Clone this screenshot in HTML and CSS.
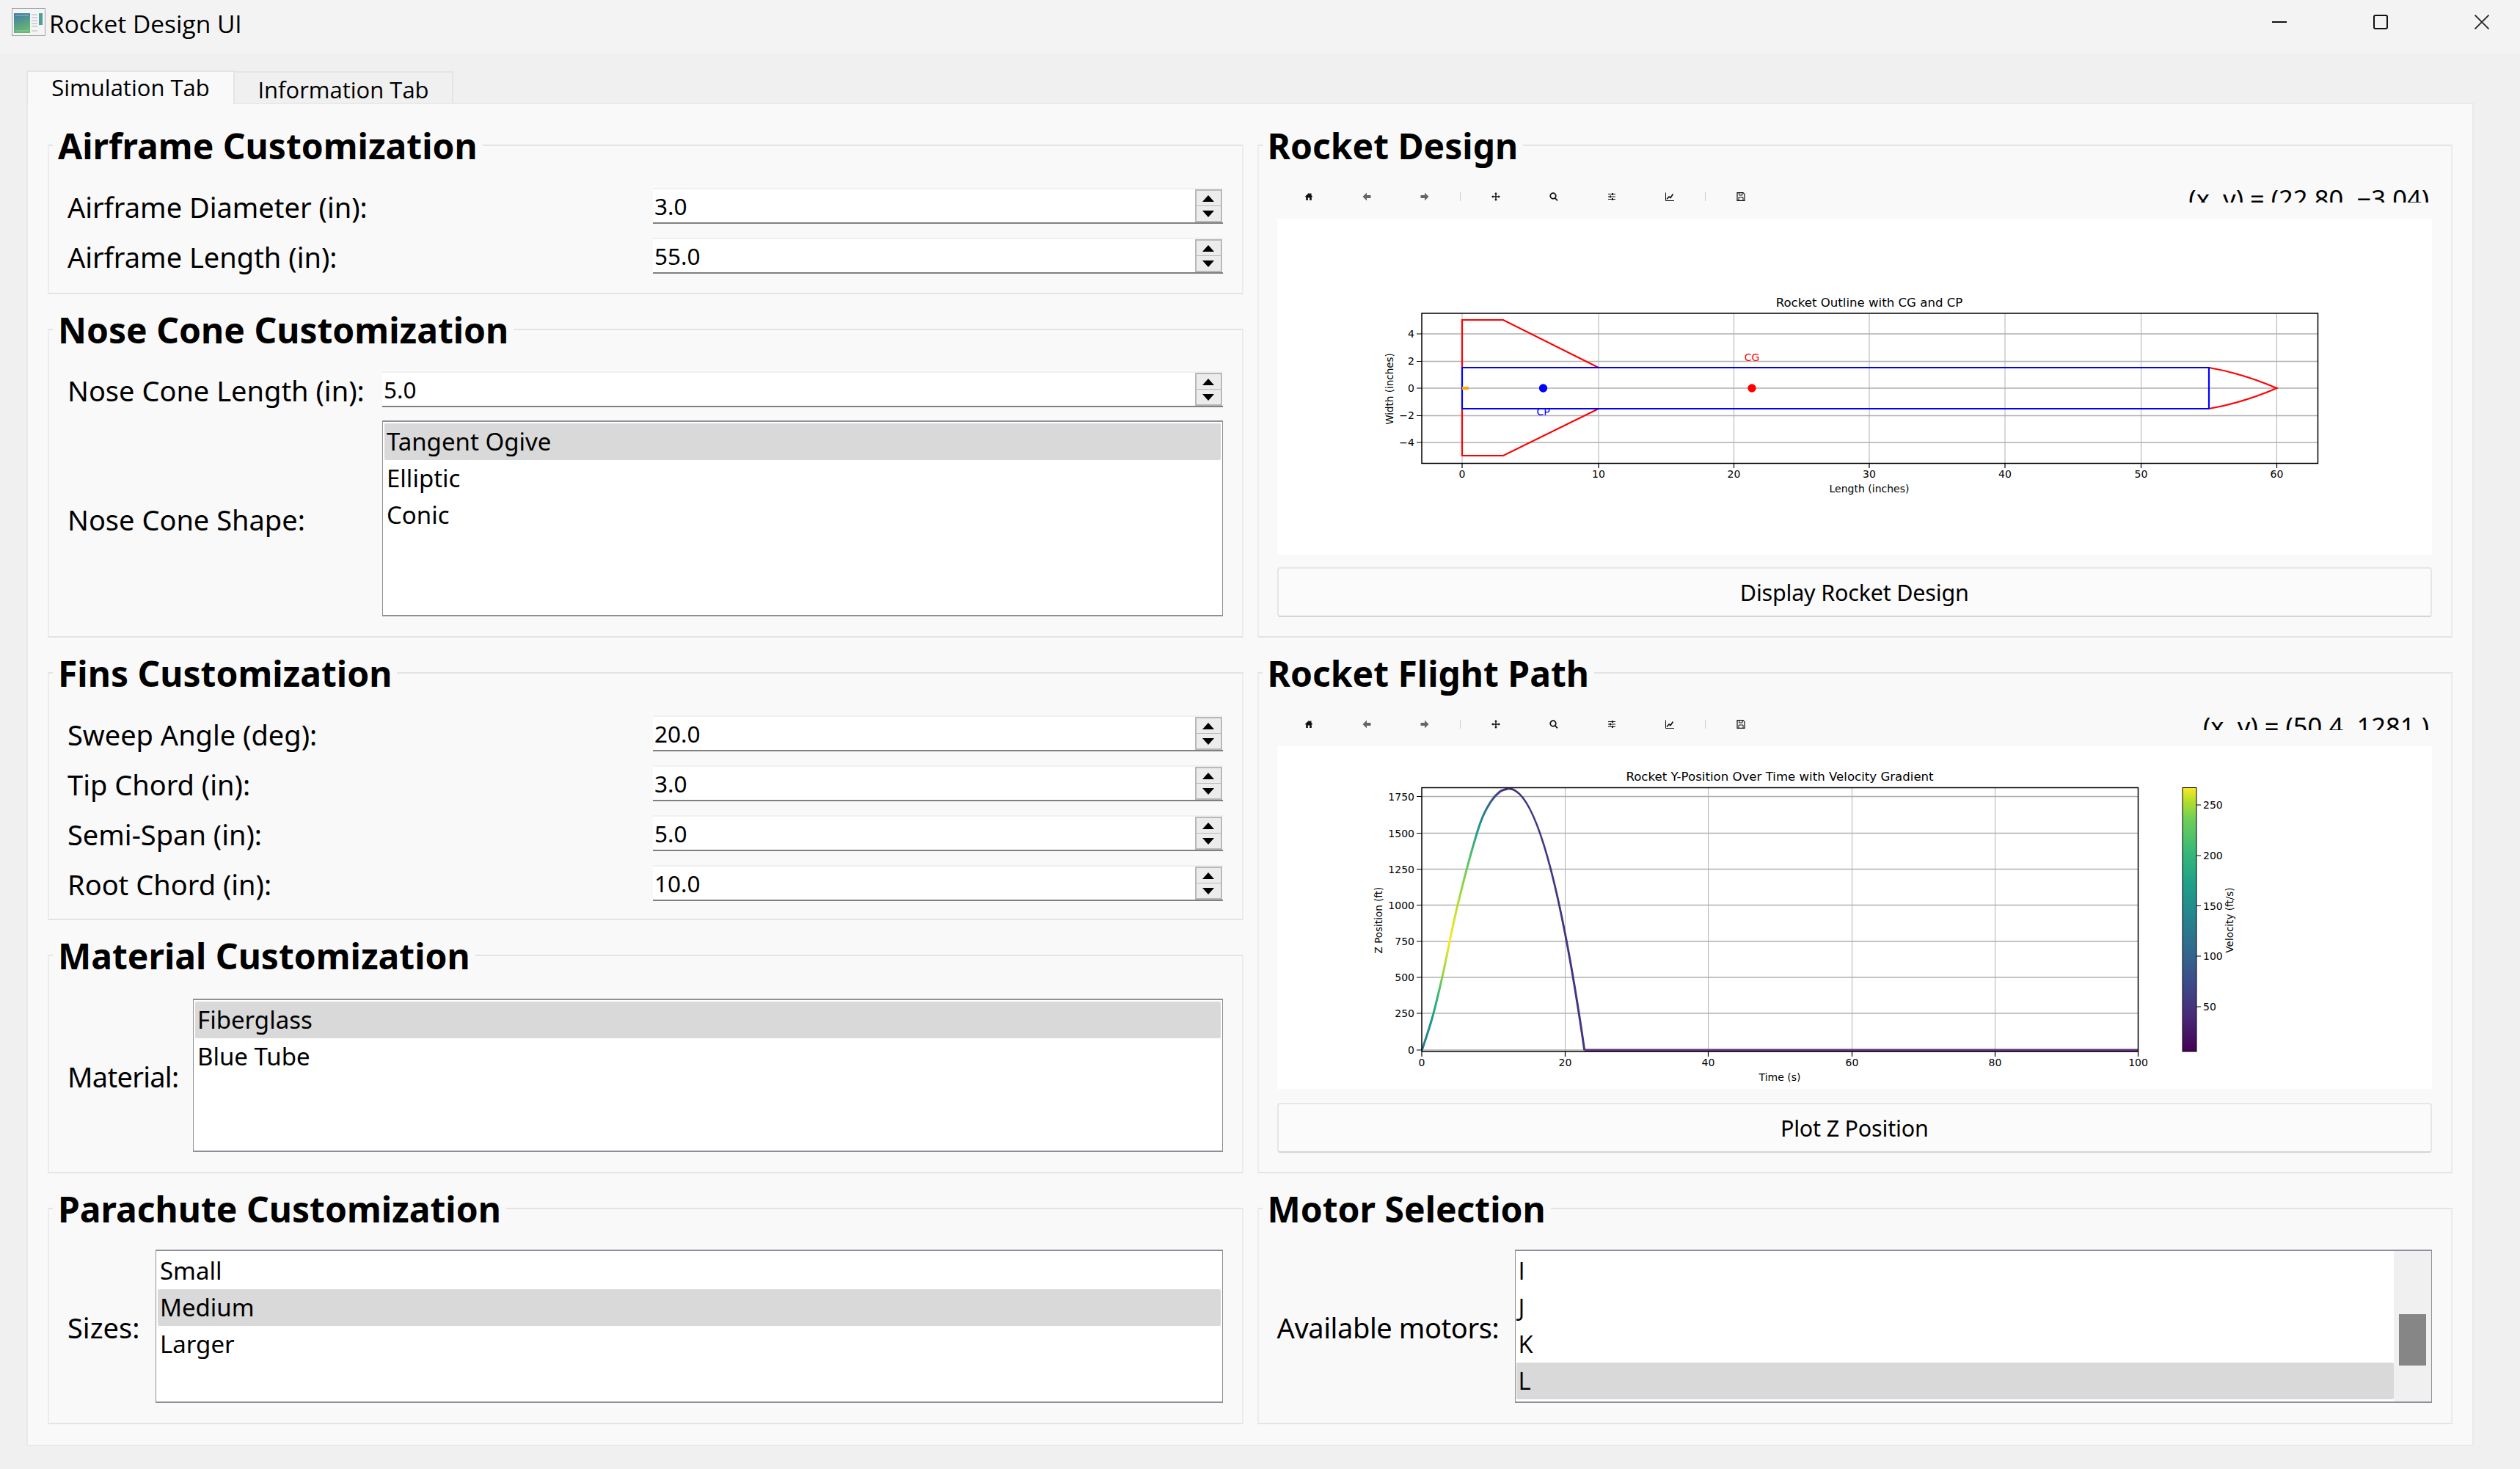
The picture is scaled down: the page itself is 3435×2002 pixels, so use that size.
FILE: index.html
```html
<!DOCTYPE html>
<html lang="en">
<head>
    <meta charset="UTF-8">
    <meta name="viewport" content="width=device-width, initial-scale=1.0">
    <title>Rocket Design UI</title>
    <link rel="stylesheet" href="styles.css">
</head>
<body>

    <header class="titlebar">
        <svg class="app-icon" viewBox="0 0 46 38">
            <defs>
                <linearGradient id="iconPanel" x1="0" y1="0" x2="0.3" y2="1">
                    <stop offset="0" stop-color="#3f78ad"/>
                    <stop offset="1" stop-color="#68b86f"/>
                </linearGradient>
            </defs>
            <rect x="0.5" y="0.5" width="45" height="37" fill="#f2f4f5" stroke="#a4a4a4"/>
            <rect x="3" y="7" width="22" height="27" fill="url(#iconPanel)"/>
            <path d="M5 10h18M5 31h18" stroke="#9fd0c4" stroke-width="0.8"/>
            <path d="M27 9h8M27 13h8M27 17h8M27 21h8M27 25h8M27 31h8" stroke="#b4b4b4" stroke-width="1.2"/>
            <rect x="37" y="7" width="5" height="16" fill="#4f9f96"/>
        </svg>
        <span class="app-title">Rocket Design UI</span>
        <div class="window-controls">
            <svg class="win-btn" viewBox="0 0 20 20"><path d="M0 10h20" stroke="#111" stroke-width="2"/></svg>
            <svg class="win-btn" viewBox="0 0 20 20"><rect x="1" y="1" width="18" height="18" rx="2" fill="none" stroke="#111" stroke-width="2"/></svg>
            <svg class="win-btn" viewBox="0 0 20 20"><path d="M0.5 0.5l19 19M19.5 0.5l-19 19" stroke="#222" stroke-width="1.8"/></svg>
        </div>
    </header>

    <main class="window-body">
        <nav class="tabs">
            <div class="tab tab-active">Simulation Tab</div>
            <div class="tab">Information Tab</div>
        </nav>

        <div class="tab-pane">
            <div class="column">

                <fieldset class="group group-airframe">
                    <legend>Airframe Customization</legend>
                    <div class="rows">
                        <div class="row">
                            <label class="wide-label">Airframe Diameter (in):</label>
                            <div class="spin"><input value="3.0"><div class="spin-btns"><span class="up"></span><span class="down"></span></div></div>
                        </div>
                        <div class="row">
                            <label class="wide-label">Airframe Length (in):</label>
                            <div class="spin"><input value="55.0"><div class="spin-btns"><span class="up"></span><span class="down"></span></div></div>
                        </div>
                    </div>
                </fieldset>

                <fieldset class="group group-nose">
                    <legend>Nose Cone Customization</legend>
                    <div class="rows rows-nose">
                        <div class="row">
                            <label>Nose Cone Length (in):</label>
                            <div class="spin"><input value="5.0"><div class="spin-btns"><span class="up"></span><span class="down"></span></div></div>
                        </div>
                        <div class="row">
                            <label>Nose Cone Shape:</label>
                            <ul class="list list-nose">
                                <li class="selected">Tangent Ogive</li>
                                <li>Elliptic</li>
                                <li>Conic</li>
                            </ul>
                        </div>
                    </div>
                </fieldset>

                <fieldset class="group group-fins">
                    <legend>Fins Customization</legend>
                    <div class="rows">
                        <div class="row">
                            <label class="wide-label">Sweep Angle (deg):</label>
                            <div class="spin"><input value="20.0"><div class="spin-btns"><span class="up"></span><span class="down"></span></div></div>
                        </div>
                        <div class="row">
                            <label class="wide-label">Tip Chord (in):</label>
                            <div class="spin"><input value="3.0"><div class="spin-btns"><span class="up"></span><span class="down"></span></div></div>
                        </div>
                        <div class="row">
                            <label class="wide-label">Semi-Span (in):</label>
                            <div class="spin"><input value="5.0"><div class="spin-btns"><span class="up"></span><span class="down"></span></div></div>
                        </div>
                        <div class="row">
                            <label class="wide-label">Root Chord (in):</label>
                            <div class="spin"><input value="10.0"><div class="spin-btns"><span class="up"></span><span class="down"></span></div></div>
                        </div>
                    </div>
                </fieldset>

                <fieldset class="group group-material">
                    <legend>Material Customization</legend>
                    <div class="row row-list">
                        <label class="label-material">Material:</label>
                        <ul class="list">
                            <li class="selected">Fiberglass</li>
                            <li>Blue Tube</li>
                        </ul>
                    </div>
                </fieldset>

                <fieldset class="group group-chute">
                    <legend>Parachute Customization</legend>
                    <div class="row row-list">
                        <label class="label-sizes">Sizes:</label>
                        <ul class="list">
                            <li>Small</li>
                            <li class="selected">Medium</li>
                            <li>Larger</li>
                        </ul>
                    </div>
                </fieldset>
            </div>

            <div class="column">

                <fieldset class="group group-design">
                    <legend>Rocket Design</legend>
                    <div class="toolbar">
                        <span class="tool"><svg viewBox="0 0 12 12"><path d="M6 1L0.5 6.3h1.7V11h2.6V7.5h2.4V11h2.6V6.3h1.7L9.5 4V1.5H8v1z" fill="#111"/></svg></span>
                        <span class="tool"><svg viewBox="0 0 12 12"><path d="M6 0.5L0.5 6 6 11.5V8h5.5V4H6z" fill="#666"/></svg></span>
                        <span class="tool"><svg viewBox="0 0 12 12"><path d="M6 0.5L11.5 6 6 11.5V8H0.5V4H6z" fill="#666"/></svg></span>
                        <span class="tool-sep"></span>
                        <span class="tool"><svg viewBox="0 0 12 12"><path d="M6 0L8 2.4H6.7V5.3H9.6V4L12 6 9.6 8V6.7H6.7V9.6H8L6 12 4 9.6H5.3V6.7H2.4V8L0 6 2.4 4V5.3H5.3V2.4H4z" fill="#111"/></svg></span>
                        <span class="tool"><svg viewBox="0 0 12 12"><circle cx="5" cy="5" r="3.8" fill="none" stroke="#111" stroke-width="1.7"/><path d="M7.6 7.8L11 11.4" stroke="#111" stroke-width="1.7"/></svg></span>
                        <span class="tool"><svg viewBox="0 0 12 12"><path d="M1 2.5h10M1 6h10M1 9.5h10" stroke="#111" stroke-width="1"/><path d="M7 1v3M4 4.5v3M7 8v3" stroke="#111" stroke-width="1.8"/></svg></span>
                        <span class="tool"><svg viewBox="0 0 12 12"><path d="M0.5 0.5V11.5H12" fill="none" stroke="#111" stroke-width="1"/><path d="M2 9.5l3-3.5 2 1.5 3.5-5" fill="none" stroke="#111" stroke-width="1.6"/></svg></span>
                        <span class="tool-sep"></span>
                        <span class="tool"><svg viewBox="0 0 12 12"><path d="M1 0.7H9L11 2.7V11.3H1z" fill="none" stroke="#111" stroke-width="1.2"/><path d="M3.5 1V4H8V1M3 11V7H9V11" fill="none" stroke="#111" stroke-width="1"/></svg></span>
                        <div class="coords">(x, y) = (22.80, −3.04)</div>
                    </div>
                    <div class="canvas canvas-design">
                        <svg viewBox="1741 298 1574 458" width="1574" height="458">
                            <g class="grid">
                                <path class="grid-h" d="M1938 455H3159M1938 492.5H3159M1938 529H3159M1938 566.5H3159M1938 603H3159"/>
                                <path class="grid-v" d="M1993 427V631M2179 427V631M2363.5 427V631M2548 427V631M2733 427V631M2918.5 427V631M3103.5 427V631"/>
                            </g>
                            <path d="M1993 501V436H2049L2179 501M1993 557V621H2049L2179 557" fill="none" stroke="#f00" stroke-width="2.2"/>
                            <path d="M3011 501Q3057 509 3103.5 529Q3057 549 3011 557" fill="none" stroke="#f00" stroke-width="2.2"/>
                            <path d="M1993 501H3011V557H1993Z" fill="none" stroke="#00f" stroke-width="2.2"/>
                            <rect x="1993" y="527" width="9" height="4" fill="#ffa500"/>
                            <circle cx="2103.5" cy="529" r="5.7" fill="#00f"/>
                            <circle cx="2388" cy="529" r="5.7" fill="#f00"/>
                            <text class="tag" x="2388" y="492" text-anchor="middle" fill="#f00">CG</text>
                            <text class="tag" x="2103.5" y="566" text-anchor="middle" fill="#00f">CP</text>
                            <rect class="axes" x="1938" y="427" width="1221.5" height="204.5"/>
                            <path class="ticks" d="M1993 631v7M2179 631v7M2363.5 631v7M2548 631v7M2733 631v7M2918.5 631v7M3103.5 631v7M1931 455h7M1931 492.5h7M1931 529h7M1931 566.5h7M1931 603h7"/>
                            <g class="tick-x" text-anchor="middle">
                                <text x="1993" y="651">0</text><text x="2179" y="651">10</text><text x="2363.5" y="651">20</text><text x="2548" y="651">30</text><text x="2733" y="651">40</text><text x="2918.5" y="651">50</text><text x="3103.5" y="651">60</text>
                            </g>
                            <g class="tick-y" text-anchor="end">
                                <text x="1928" y="460">4</text><text x="1928" y="497">2</text><text x="1928" y="534">0</text><text x="1928" y="571">−2</text><text x="1928" y="608">−4</text>
                            </g>
                            <text class="plot-title" x="2548" y="418" text-anchor="middle">Rocket Outline with CG and CP</text>
                            <text class="plot-label" x="2548" y="671" text-anchor="middle">Length (inches)</text>
                            <text class="plot-label-v" transform="translate(1899 530) rotate(-90)" text-anchor="middle">Width (inches)</text>
                        </svg>
                    </div>
                    <button class="action">Display Rocket Design</button>
                </fieldset>

                <fieldset class="group group-flight">
                    <legend>Rocket Flight Path</legend>
                    <div class="toolbar">
                        <span class="tool"><svg viewBox="0 0 12 12"><path d="M6 1L0.5 6.3h1.7V11h2.6V7.5h2.4V11h2.6V6.3h1.7L9.5 4V1.5H8v1z" fill="#111"/></svg></span>
                        <span class="tool"><svg viewBox="0 0 12 12"><path d="M6 0.5L0.5 6 6 11.5V8h5.5V4H6z" fill="#666"/></svg></span>
                        <span class="tool"><svg viewBox="0 0 12 12"><path d="M6 0.5L11.5 6 6 11.5V8H0.5V4H6z" fill="#666"/></svg></span>
                        <span class="tool-sep"></span>
                        <span class="tool"><svg viewBox="0 0 12 12"><path d="M6 0L8 2.4H6.7V5.3H9.6V4L12 6 9.6 8V6.7H6.7V9.6H8L6 12 4 9.6H5.3V6.7H2.4V8L0 6 2.4 4V5.3H5.3V2.4H4z" fill="#111"/></svg></span>
                        <span class="tool"><svg viewBox="0 0 12 12"><circle cx="5" cy="5" r="3.8" fill="none" stroke="#111" stroke-width="1.7"/><path d="M7.6 7.8L11 11.4" stroke="#111" stroke-width="1.7"/></svg></span>
                        <span class="tool"><svg viewBox="0 0 12 12"><path d="M1 2.5h10M1 6h10M1 9.5h10" stroke="#111" stroke-width="1"/><path d="M7 1v3M4 4.5v3M7 8v3" stroke="#111" stroke-width="1.8"/></svg></span>
                        <span class="tool"><svg viewBox="0 0 12 12"><path d="M0.5 0.5V11.5H12" fill="none" stroke="#111" stroke-width="1"/><path d="M2 9.5l3-3.5 2 1.5 3.5-5" fill="none" stroke="#111" stroke-width="1.6"/></svg></span>
                        <span class="tool-sep"></span>
                        <span class="tool"><svg viewBox="0 0 12 12"><path d="M1 0.7H9L11 2.7V11.3H1z" fill="none" stroke="#111" stroke-width="1.2"/><path d="M3.5 1V4H8V1M3 11V7H9V11" fill="none" stroke="#111" stroke-width="1"/></svg></span>
                        <div class="coords">(x, y) = (50.4, 1281.)</div>
                    </div>
                    <div class="canvas canvas-flight">
                        <svg viewBox="1741 1017 1574 467" width="1574" height="467">
                            <defs>
                                <linearGradient id="viridis" x1="0" y1="1" x2="0" y2="0">
                                    <stop offset="0" stop-color="#440154"/>
                                    <stop offset="0.13" stop-color="#482878"/>
                                    <stop offset="0.25" stop-color="#3e4989"/>
                                    <stop offset="0.38" stop-color="#31688e"/>
                                    <stop offset="0.5" stop-color="#26828e"/>
                                    <stop offset="0.63" stop-color="#1f9e89"/>
                                    <stop offset="0.75" stop-color="#35b779"/>
                                    <stop offset="0.88" stop-color="#6ece58"/>
                                    <stop offset="0.95" stop-color="#b5de2b"/>
                                    <stop offset="1" stop-color="#fde725"/>
                                </linearGradient>
                                <!-- velocity colour on the way up, by height -->
                                <linearGradient id="ascent" gradientUnits="userSpaceOnUse" x1="0" y1="1431" x2="0" y2="1075">
                                    <stop offset="0" stop-color="#2a788e"/>
                                    <stop offset="0.126" stop-color="#1f9e89"/>
                                    <stop offset="0.21" stop-color="#35b779"/>
                                    <stop offset="0.29" stop-color="#90d743"/>
                                    <stop offset="0.42" stop-color="#fde725"/>
                                    <stop offset="0.556" stop-color="#b5de2b"/>
                                    <stop offset="0.69" stop-color="#6ece58"/>
                                    <stop offset="0.84" stop-color="#1f9e89"/>
                                    <stop offset="0.94" stop-color="#31688e"/>
                                    <stop offset="0.99" stop-color="#443a83"/>
                                    <stop offset="1" stop-color="#472d7b"/>
                                </linearGradient>
                            </defs>
                            <path class="grid-h" d="M1938 1085.5H2914M1938 1135.5H2914M1938 1184.5H2914M1938 1233.5H2914M1938 1283H2914M1938 1332H2914M1938 1381H2914M1938 1431H2914"/>
                            <path class="grid-v" d="M2133.5 1073V1433M2328.5 1073V1433M2524.5 1073V1433M2719.5 1073V1433"/>
                            <path class="curve" stroke="url(#ascent)" d="M1938.2 1431.4C1940.6 1423.8 1947.8 1403.4 1952.6 1386C1957.4 1368.6 1961.2 1352.5 1966.9 1327C1972.6 1301.5 1979 1265.7 1987 1233C1995 1200.3 2007.4 1153.8 2014.6 1131C2021.8 1108.2 2025 1104.7 2030 1096C2035 1087.3 2040 1082.6 2044.4 1079C2048.8 1075.4 2054.5 1075.4 2056.5 1074.7"/>
                            <path class="curve" stroke="#463480" d="M2056.5 1074.7Q2108.15 1074.7 2159.8 1431.4"/>
                            <path class="curve curve-flat" stroke="#65357f" d="M2159.8 1431.4H2914"/>
                            <rect class="axes" x="1938" y="1073.5" width="976.5" height="359.5"/>
                            <path class="ticks" d="M1938 1433v7M2133.5 1433v7M2328.5 1433v7M2524.5 1433v7M2719.5 1433v7M2914.5 1433v7M1931 1085.5h7M1931 1135.5h7M1931 1184.5h7M1931 1233.5h7M1931 1283h7M1931 1332h7M1931 1381h7M1931 1431h7"/>
                            <g class="tick-x" text-anchor="middle">
                                <text x="1938" y="1453">0</text><text x="2133.5" y="1453">20</text><text x="2328.5" y="1453">40</text><text x="2524.5" y="1453">60</text><text x="2719.5" y="1453">80</text><text x="2914.5" y="1453">100</text>
                            </g>
                            <g class="tick-y" text-anchor="end">
                                <text x="1928" y="1090.5">1750</text><text x="1928" y="1140.5">1500</text><text x="1928" y="1189.5">1250</text><text x="1928" y="1238.5">1000</text><text x="1928" y="1288">750</text><text x="1928" y="1337">500</text><text x="1928" y="1386">250</text><text x="1928" y="1436">0</text>
                            </g>
                            <text class="plot-title" x="2426" y="1064" text-anchor="middle">Rocket Y-Position Over Time with Velocity Gradient</text>
                            <text class="plot-label" x="2426" y="1473" text-anchor="middle">Time (s)</text>
                            <text class="plot-label-v" transform="translate(1884 1254) rotate(-90)" text-anchor="middle">Z Position (ft)</text>
                            <rect x="2975" y="1073.5" width="19" height="359.5" fill="url(#viridis)" stroke="#000" stroke-width="1"/>
                            <path class="ticks" d="M2994 1097h6M2994 1166h6M2994 1234.5h6M2994 1303h6M2994 1372h6"/>
                            <g class="tick-x">
                                <text x="3003" y="1102">250</text><text x="3003" y="1171">200</text><text x="3003" y="1239.5">150</text><text x="3003" y="1308">100</text><text x="3003" y="1377">50</text>
                            </g>
                            <text class="plot-label-v" transform="translate(3044 1254) rotate(-90)" text-anchor="middle">Velocity (ft/s)</text>
                        </svg>
                    </div>
                    <button class="action action-flight">Plot Z Position</button>
                </fieldset>

                <fieldset class="group group-chute">
                    <legend>Motor Selection</legend>
                    <div class="row row-list">
                        <label class="label-motors">Available motors:</label>
                        <div class="list list-scroll">
                            <ul>
                                <li>I</li>
                                <li>J</li>
                                <li>K</li>
                                <li class="selected">L</li>
                            </ul>
                            <div class="scrollbar"><div class="thumb"></div></div>
                        </div>
                    </div>
                </fieldset>
            </div>
        </div>
    </main>

</body>
</html>
```

FILE: styles.css
```css
* {
    box-sizing: border-box;
}

body {
    margin: 0;
    width: 3435px;
    height: 2002px;
    overflow: hidden;
    background: #f0f0f0;
    color: #000;
    font-family: "Noto Sans", "Open Sans", sans-serif;
}

/* window frame */
.titlebar {
    height: 73px;
    background: #f3f3f3;
    display: flex;
    align-items: center;
    padding-left: 16px;
}

.app-icon {
    width: 46px;
    height: 38px;
    margin-top: -14px;
}

.app-title {
    margin-left: 5px;
    margin-top: -10px;
    font-family: "Open Sans", sans-serif;
    font-size: 33.5px;
}

.window-controls {
    margin-left: auto;
    margin-top: -14px;
    padding-right: 42px;
    display: flex;
    gap: 118px;
}

.win-btn {
    width: 20px;
    height: 20px;
}

.window-body {
    padding: 21px 63px 0 36px;
}

/* tabs */
.tabs {
    display: flex;
    align-items: flex-end;
    height: 46px;
}

.tab {
    height: 43px;
    width: 298px;
    background: #f0f0f0;
    border: 2px solid #e4e4e4;
    border-bottom: none;
    border-left: none;
    font-family: "Open Sans", sans-serif;
    font-size: 31px;
    line-height: 46px;
    text-align: center;
}

.tab-active {
    height: 46px;
    width: 284px;
    background: #f9f9f9;
    border-left: 2px solid #e4e4e4;
    line-height: 43px;
    margin-bottom: -2px;
    position: relative;
}

.tab-pane {
    height: 1831px;
    background: #f9f9f9;
    border: 2px solid #e9e9e9;
    padding: 30px 27px 28px;
    display: flex;
    gap: 19px;
}

.column {
    width: 1630px;
    display: flex;
    flex-direction: column;
    gap: 22px;
}

/* group boxes */
.group {
    margin: 0;
    min-width: 0;
    padding: 0 26px 0 25px;
    border: 2px solid #e4e4e4;
    border-left-color: #ececec;
    border-right-color: #ececec;
}

.group legend {
    margin-left: -20px;
    padding: 0 7px;
    height: 52px;
    font-size: 48px;
    font-weight: 700;
    line-height: 54px;
    white-space: nowrap;
}

.group-airframe { height: 229px; }
.group-nose { height: 446px; }
.group-fins { height: 363px; }
.group-material { height: 323px; }
.group-chute { height: 320px; }
.group-design { height: 697px; }
.group-flight { height: 708px; }

.rows {
    display: flex;
    flex-direction: column;
    gap: 19px;
    padding-top: 32px;
}

.rows-nose {
    display: grid;
    grid-template-columns: 409px 1fr;
    column-gap: 20px;
    row-gap: 18px;
    padding-top: 31px;
}

.rows-nose .row {
    display: contents;
}

.rows-nose label {
    align-self: center;
}

.row {
    display: flex;
    align-items: center;
    gap: 20px;
}

.row label {
    height: 49px;
    font-size: 38px;
    line-height: 52px;
    white-space: nowrap;
}

.wide-label {
    width: 778px;
}

.row-list {
    padding-top: 30px;
}

.group-material .row-list {
    padding-top: 33px;
}

.label-material {
    width: 151px;
    letter-spacing: -0.7px;
}

.label-sizes {
    width: 100px;
}

.label-motors {
    width: 304px;
    letter-spacing: -0.4px;
}

/* spin boxes */
.spin {
    flex: 1;
    height: 49px;
    display: flex;
    background: #fff;
    border-top: 2px solid #f0f0f0;
    border-bottom: 2px solid #808080;
}

.spin input {
    flex: 1;
    min-width: 0;
    border: none;
    outline: none;
    background: transparent;
    padding: 0 0 0 2px;
    font-family: inherit;
    font-size: 31.5px;
    color: #000;
}

.spin-btns {
    width: 37px;
    display: flex;
    flex-direction: column;
    background: #ececec;
    border: 2px solid #b8b8b8;
    margin-right: 1px;
}

.spin-btns span {
    flex: 1;
    display: flex;
    align-items: center;
    justify-content: center;
}

.spin-btns .up {
    border-bottom: 1px solid #b8b8b8;
}

.spin-btns .up::before {
    content: "";
    border: 8px solid transparent;
    border-top: none;
    border-bottom: 9px solid #000;
}

.spin-btns .down::before {
    content: "";
    border: 8px solid transparent;
    border-bottom: none;
    border-top: 9px solid #000;
}

/* list boxes */
.list {
    flex: 1;
    min-width: 0;
    height: 209px;
    margin: 0;
    padding: 2px;
    list-style: none;
    background: #fff;
    border: 2px solid #8f8f99;
    border-left-width: 1px;
    border-right-width: 1px;
}

.list li {
    height: 50px;
    padding-left: 3px;
    font-size: 33px;
    line-height: 50px;
    border-radius: 2px;
}

.list li.selected {
    background: #d9d9d9;
}

.list-nose {
    height: 267px;
}

.list-scroll {
    display: flex;
    padding: 0;
}

.list-scroll ul {
    flex: 1;
    margin: 0;
    padding: 2px 0 2px 1px;
    list-style: none;
}

.list-scroll li {
    font-family: "Open Sans", sans-serif;
}

.scrollbar {
    width: 51px;
    background: #f0f0f0;
    padding: 86px 7px 0 7px;
}

.thumb {
    height: 70px;
    background: #868686;
}

/* matplotlib toolbar */
.toolbar {
    height: 74px;
    display: flex;
    align-items: flex-start;
    padding: 18px 4px 0 4px;
}

.tool {
    width: 79px;
    height: 52px;
    display: flex;
    align-items: center;
    justify-content: center;
}

.tool svg {
    width: 12px;
    height: 12px;
}

.tool-sep {
    width: 18px;
    height: 52px;
    background: linear-gradient(#ccc, #ccc) center / 1px 12px no-repeat;
}

.coords {
    margin-left: auto;
    margin-top: 16px;
    height: 18px;
    overflow: hidden;
    font-size: 34.5px;
    line-height: 26px;
    white-space: nowrap;
}

.canvas {
    background: #fff;
}

.canvas svg {
    display: block;
}

.canvas-design { height: 458px; }
.canvas-flight { height: 467px; }

.action {
    display: block;
    width: 100%;
    height: 68px;
    margin-top: 17px;
    background: #fbfbfb;
    border: 2px solid #e6e6e6;
    border-bottom-color: #d4d4d4;
    border-radius: 4px;
    font-family: inherit;
    font-size: 30.5px;
    letter-spacing: -0.2px;
    color: #000;
}

.action-flight {
    margin-top: 19px;
}

/* plot text and lines */
.canvas text {
    font-family: "DejaVu Sans", sans-serif;
}

.grid-h {
    fill: none;
    stroke: #b0b0b0;
    stroke-width: 1.6;
}

.grid-v {
    fill: none;
    stroke: #b0b0b0;
    stroke-width: 1;
}

.axes {
    fill: none;
    stroke: #000;
    stroke-width: 1.5;
}

.ticks {
    fill: none;
    stroke: #000;
    stroke-width: 1.2;
}

.curve {
    fill: none;
    stroke-width: 3;
}

.curve-flat {
    stroke-width: 3.6;
}

.tick-x text,
.tick-y text,
.plot-label,
.tag {
    font-size: 14px;
}

.plot-label-v {
    font-size: 13.5px;
}

.plot-title {
    font-size: 16.6px;
}
```
